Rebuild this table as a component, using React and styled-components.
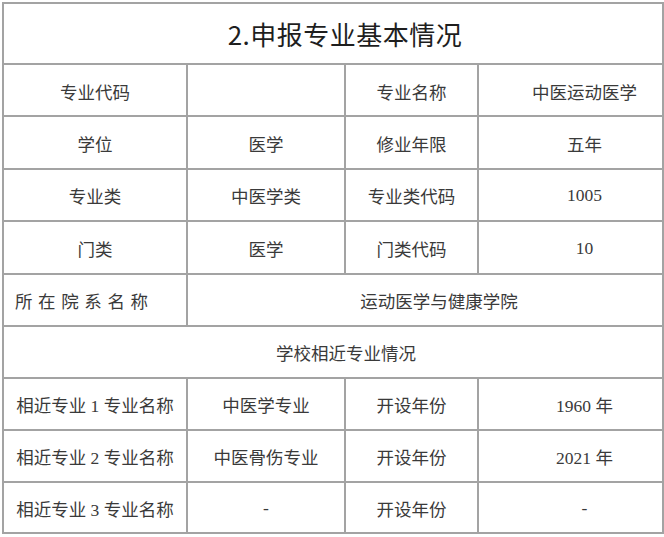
import React from "react";
import styled, { createGlobalStyle } from "styled-components";

// STYLING
const GlobalStyle = createGlobalStyle`
  html, body {
    margin: 0;
    padding: 0;
    background: #ffffff;
  }
`;

const Page = styled.div`
  padding: 2px 2px 0 2px;
  font-family: "Liberation Serif", "Noto Sans CJK SC", serif;
  color: #3a3a3a;
`;

const Table = styled.table`
  width: 660px;
  table-layout: fixed;
  border-collapse: collapse;
  border: 2px solid #a3a3a3;
`;

const TitleCell = styled.td`
  height: 59px;
  padding: 0 0 0 24px;
  border: 2px solid #a3a3a3;
  text-align: center;
  vertical-align: middle;
  font-family: "Noto Sans CJK SC", "Liberation Sans", sans-serif;
  font-size: 26px;
  color: #1e1e1e;
  letter-spacing: 0.5px;
`;

const Row = styled.tr`
  height: ${(p) => p.$h || 52.4}px;
`;

const Cell = styled.td`
  padding: 2px 0 0 ${(p) => p.$shift || 0}px;
  border: 2px solid #a3a3a3;
  text-align: ${(p) => (p.$left ? "left" : "center")};
  vertical-align: middle;
  font-size: 17.5px;
  white-space: nowrap;
  letter-spacing: ${(p) => p.$spread || 0}px;
  ${(p) => p.$left && "padding-left: 11px;"}
`;

const rows = [
  ["专业代码", "", "专业名称", "中医运动医学"],
  ["学位", "医学", "修业年限", "五年"],
  ["专业类", "中医学类", "专业类代码", "1005"],
  ["门类", "医学", "门类代码", "10"],
];

const similar = [
  ["相近专业 1 专业名称", "中医学专业", "开设年份", "1960 年"],
  ["相近专业 2 专业名称", "中医骨伤专业", "开设年份", "2021 年"],
  ["相近专业 3 专业名称", "-", "开设年份", "-"],
];

const App = () => {
  return (
    <>
      <GlobalStyle />
      <Page>
        <Table>
          <colgroup>
            <col style={{ width: 184 }} />
            <col style={{ width: 158 }} />
            <col style={{ width: 133 }} />
            <col style={{ width: 185 }} />
          </colgroup>
          <tbody>
            <tr>
              <TitleCell colSpan={4}>2.申报专业基本情况</TitleCell>
            </tr>
            {rows.map((r) => (
              <Row key={r[0]}>
                <Cell>{r[0]}</Cell>
                <Cell>{r[1]}</Cell>
                <Cell>{r[2]}</Cell>
                <Cell $shift={28}>{r[3]}</Cell>
              </Row>
            ))}
            <Row>
              <Cell $left $spread={5.6}>
                所在院系名称
              </Cell>
              <Cell colSpan={3} $shift={28}>
                运动医学与健康学院
              </Cell>
            </Row>
            <Row $h={52}>
              <Cell colSpan={4} $shift={26}>
                学校相近专业情况
              </Cell>
            </Row>
            {similar.map((r, i) => (
              <Row key={r[0]} $h={i === 2 ? 51.5 : 52}>
                <Cell>{r[0]}</Cell>
                <Cell>{r[1]}</Cell>
                <Cell>{r[2]}</Cell>
                <Cell $shift={28}>{r[3]}</Cell>
              </Row>
            ))}
          </tbody>
        </Table>
      </Page>
    </>
  );
};

export default App;
